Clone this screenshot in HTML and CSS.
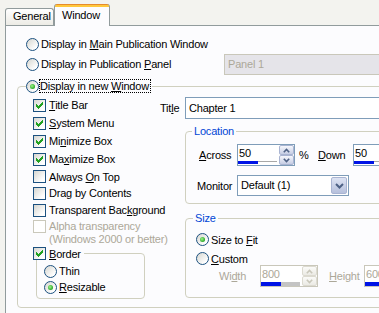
FILE: index.html
```html
<!DOCTYPE html>
<html>
<head>
<meta charset="utf-8">
<link rel="stylesheet" href="styles.css">
</head>
<body>
<svg class="defs" width="0" height="0" aria-hidden="true">
  <defs>
    <path id="chk" d="M8 2h1v1h-1z M7 3h2v1h-2z M2 4h1v1h-1z M6 4h3v1h-3z M2 5h2v1h-2z M5 5h3v1h-3z M2 6h5v1h-5z M3 7h3v1h-3z M4 8h1v1h-1z"/>
  </defs>
</svg>

<div class="tabs">
  <div class="tab">General</div>
  <div class="tab active">Window</div>
</div>

<div class="panel">
  <div class="row">
    <span class="radio"></span><span class="lbl">Display in <u>M</u>ain Publication Window</span>
  </div>
  <div class="row">
    <div class="opt"><span class="radio"></span><span class="lbl">Display in Publication <u>P</u>anel</span></div>
    <div class="combo off">Panel 1</div>
  </div>

  <fieldset class="grp main">
    <legend class="lg-main"><span class="radio on"></span><span class="focus">Display in new <u>W</u>indow</span></legend>
    <div class="cols">
      <div class="left">
        <div class="ck h18"><span class="box"><svg width="11" height="11"><use href="#chk"/></svg></span><span class="t"><u>T</u>itle Bar</span></div>
        <div class="ck h18"><span class="box"><svg width="11" height="11"><use href="#chk"/></svg></span><span class="t"><u>S</u>ystem Menu</span></div>
        <div class="ck h18"><span class="box"><svg width="11" height="11"><use href="#chk"/></svg></span><span class="t">Mi<u>n</u>imize Box</span></div>
        <div class="ck h18"><span class="box"><svg width="11" height="11"><use href="#chk"/></svg></span><span class="t">Ma<u>x</u>imize Box</span></div>
        <div class="ck h17"><span class="box"></span><span class="t">Always <u>O</u>n Top</span></div>
        <div class="ck h16"><span class="box"></span><span class="t">Drag by Contents</span></div>
        <div class="ck h18"><span class="box"></span><span class="t">Transparent Bac<u>k</u>ground</span></div>
        <div class="ck alpha"><span class="box"></span><span class="t">Alpha transparency<br>(Windows 2000 or better)</span></div>

        <fieldset class="grp bord">
          <legend class="lg-bord"><span class="box"><svg width="11" height="11"><use href="#chk"/></svg></span><span class="t"><u>B</u>order</span></legend>
          <div class="bord-in">
            <div class="rd"><span class="radio"></span><span class="t">Thin</span></div>
            <div class="rd"><span class="radio on"></span><span class="t"><u>R</u>esizable</span></div>
          </div>
        </fieldset>
      </div>

      <div class="right">
        <div class="title-row">
          <span class="tl">Tit<u>l</u>e</span>
          <div class="edit">Chapter 1</div>
        </div>

        <fieldset class="grp loc">
          <legend class="lg-blue">Location</legend>
          <div class="loc-in">
            <div class="frow">
              <span class="lab across"><u>A</u>cross</span>
              <div class="spin">
                <div class="val"><span class="n">50</span><div class="bar"><span class="b"></span><span class="g"></span></div></div>
                <div class="btns">
                  <span class="sb"><svg width="7" height="5"><polyline points="0.8,4.2 3.5,1.4 6.2,4.2"/></svg></span>
                  <span class="sb"><svg width="7" height="5"><polyline points="0.8,0.8 3.5,3.6 6.2,0.8"/></svg></span>
                </div>
              </div>
              <span class="pct">%</span>
              <span class="down"><u>D</u>own</span>
              <div class="spin">
                <div class="val"><span class="n">50</span><div class="bar"><span class="b"></span><span class="g"></span></div></div>
                <div class="btns">
                  <span class="sb"><svg width="7" height="5"><polyline points="0.8,4.2 3.5,1.4 6.2,4.2"/></svg></span>
                  <span class="sb"><svg width="7" height="5"><polyline points="0.8,0.8 3.5,3.6 6.2,0.8"/></svg></span>
                </div>
              </div>
            </div>
            <div class="frow mrow">
              <span class="lab">Monitor</span>
              <div class="dd">
                <span class="dd-t">Default (1)</span>
                <span class="dd-b"><svg width="9" height="6"><polyline points="1,1 4.5,4.5 8,1"/></svg></span>
              </div>
            </div>
          </div>
        </fieldset>

        <fieldset class="grp size">
          <legend class="lg-blue">Size</legend>
          <div class="size-in">
            <div class="rd13"><span class="radio on"></span><span class="t">Size to <u>F</u>it</span></div>
            <div class="rd13 custom"><span class="radio"></span><span class="t"><u>C</u>ustom</span></div>
            <div class="wrow">
              <span class="wl">Wi<u>d</u>th</span>
              <div class="spin off">
                <div class="val"><span class="n">800</span><div class="bar"><span class="b"></span><span class="g"></span></div></div>
                <div class="btns">
                  <span class="sb"><svg width="7" height="5"><polyline points="0.8,4.2 3.5,1.4 6.2,4.2"/></svg></span>
                  <span class="sb"><svg width="7" height="5"><polyline points="0.8,0.8 3.5,3.6 6.2,0.8"/></svg></span>
                </div>
              </div>
              <span class="hl"><u>H</u>eight</span>
              <div class="spin off">
                <div class="val"><span class="n">600</span><div class="bar"><span class="b"></span><span class="g"></span></div></div>
                <div class="btns">
                  <span class="sb"><svg width="7" height="5"><polyline points="0.8,4.2 3.5,1.4 6.2,4.2"/></svg></span>
                  <span class="sb"><svg width="7" height="5"><polyline points="0.8,0.8 3.5,3.6 6.2,0.8"/></svg></span>
                </div>
              </div>
            </div>
          </div>
        </fieldset>
      </div>
    </div>
  </fieldset>
</div>
</body>
</html>
```

FILE: styles.css
```css
* { box-sizing: border-box; }
html, body { margin: 0; padding: 0; }
body {
  width: 379px;
  height: 313px;
  overflow: hidden;
  background: #f3f3ef;
  font-family: "Liberation Sans", Arial, sans-serif;
  font-size: 11px;
  letter-spacing: -0.2px;
  color: #000;
}
u { text-decoration: underline; text-underline-offset: 1px; text-decoration-thickness: 1px; }
.defs { position: absolute; width: 0; height: 0; }

/* tabs */
.tabs {
  display: flex;
  align-items: flex-end;
  height: 25px;
  padding-left: 5px;
  position: relative;
  z-index: 2;
}
.tab {
  width: 49px;
  height: 17px;
  border: 1px solid #919b9c;
  border-bottom: 0;
  border-radius: 3px 3px 0 0;
  background: linear-gradient(#ffffff, #ecebe5);
  padding-left: 7px;
  line-height: 14px;
  white-space: nowrap;
}
.tab.active {
  width: 56px;
  height: 22px;
  margin-bottom: -1px;
  border-top: 0;
  background: linear-gradient(#e68b2c 0, #e68b2c 1px, #ffc83c 1px, #ffc83c 3px, #fcfcfe 3px);
  padding-top: 5px;
  line-height: 13px;
}

/* panel */
.panel {
  margin-left: 5px;
  width: 420px;
  height: 300px;
  border-top: 1px solid #919b9c;
  border-left: 1px solid #919b9c;
  background: #fcfcfe;
  padding: 8px 0 0 11px;
}
.row {
  display: flex;
  align-items: center;
  height: 20px;
  padding-left: 9px;
}
.opt { display: flex; align-items: center; width: 198px; }
.lbl { margin-left: 2px; white-space: nowrap; }
.combo {
  height: 21px;
  width: 180px;
  border: 1px solid #7f9db9;
  background: #fff;
  padding-left: 3px;
  line-height: 19px;
}
.combo.off { border-color: #c9c7ba; background: #e5e4e9; color: #aca899; }

/* radio & checkbox */
.radio {
  flex: none;
  position: relative;
  width: 13px;
  height: 13px;
  border-radius: 50%;
  border: 1px solid #1c5180;
  background: linear-gradient(135deg, #d6d6d0, #ffffff 80%);
}
.radio.on::after {
  content: "";
  position: absolute;
  left: 3px;
  top: 3px;
  width: 5px;
  height: 5px;
  border-radius: 50%;
  background: radial-gradient(circle at 40% 40%, #a0f58a, #21a121 75%);
}
.box {
  flex: none;
  width: 13px;
  height: 13px;
  border: 1px solid #1c5180;
  background: linear-gradient(135deg, #d6d6d0, #ffffff 80%);
}
.box svg { display: block; fill: #21a121; shape-rendering: crispEdges; }

/* group boxes */
.grp {
  border: 1px solid #d0d0bf;
  border-radius: 4px;
  padding: 0;
  margin: 0;
  min-width: 0;
}
.main { margin-top: 5px; width: 410px; }
.lg-main {
  display: flex;
  align-items: center;
  height: 14px;
  margin-left: 8px;
  padding: 0 1px 0 0;
}
.focus {
  border: 1px dotted #000;
  padding: 0 1px 0 0;
  line-height: 12px;
  white-space: nowrap;
}
.cols { display: flex; }
.left { flex: none; width: 142px; padding: 3px 0 8px 15px; }
.ck { display: flex; align-items: center; }
.ck .t { margin-left: 3px; white-space: nowrap; }
.h18 { height: 18px; }
.h17 { height: 17px; }
.h16 { height: 16px; }
.alpha { align-items: flex-start; padding-top: 1px; color: #aca899; }
.alpha .box { border-color: #cac8bb; background: #fff; }
.alpha .t { line-height: 13px; }

.bord { margin: 1px 0 0 3px; width: 109px; }
.lg-bord {
  display: flex;
  align-items: center;
  height: 13px;
  margin-left: -4px;
  padding: 0 3px 0 0;
}
.lg-bord .t { margin-left: 3px; }
.bord-in { padding: 3px 0 3px 7px; }
.rd { display: flex; align-items: center; height: 16px; }
.rd .t, .rd13 .t { margin-left: 2px; white-space: nowrap; }

/* right column */
.right { flex: none; width: 250px; padding-top: 4px; }
.title-row { display: flex; align-items: center; height: 22px; }
.tl { width: 25px; }
.edit {
  width: 220px;
  height: 22px;
  border: 1px solid #7f9db9;
  background: #fff;
  padding-left: 3px;
  line-height: 20px;
}
.lg-blue { color: #0046d5; padding: 0 2px; line-height: 13px; }
.loc { margin: 6px 0 0 25px; width: 220px; }
.loc .lg-blue { margin-left: 6px; }
.loc-in { padding: 6px 0 7px 11px; }
.frow { display: flex; align-items: center; height: 22px; }
.mrow { margin-top: 9px; height: 21px; }
.lab { width: 40px; flex: none; }
.across { padding-left: 2px; }
.pct { width: 19px; margin-left: 4px; flex: none; }
.down { width: 35px; flex: none; }

.spin {
  flex: none;
  display: flex;
  width: 58px;
  height: 22px;
  border: 1px solid #7f9db9;
  background: #fff;
}
.val { flex: 1; display: flex; flex-direction: column; padding-top: 2px; }
.val .n { line-height: 13px; padding-left: 1px; }
.bar { display: flex; height: 3px; margin-top: 1px; }
.bar .b { width: 20px; background: #0014e6; }
.bar .g { width: 19px; height: 1px; background: #a8a8a8; }
.btns { width: 15px; display: flex; flex-direction: column; }
.sb {
  height: 10px;
  border: 1px solid #a9b4d2;
  border-radius: 2px;
  background: linear-gradient(#f6f7fc, #c6cde4);
  display: flex;
  align-items: center;
  justify-content: center;
}
.sb svg { display: block; fill: none; stroke: #4d6185; stroke-width: 1.6; }

.spin.off { border-color: #c9c7ba; color: #aca899; }
.spin.off .bar { height: 4px; }
.spin.off .bar .g { height: 4px; background: #c4c4c4; }
.spin.off .sb { border-color: #dcdad0; background: linear-gradient(#fbfbf9, #ebeae4); }
.spin.off .sb svg { stroke: #c9c7ba; }

.dd {
  flex: none;
  display: flex;
  width: 112px;
  height: 21px;
  border: 1px solid #7f9db9;
  background: #fff;
}
.dd-t { flex: 1; padding-left: 3px; line-height: 19px; }
.dd-b {
  width: 16px;
  margin: 1px;
  border: 1px solid #a9b4d2;
  border-radius: 2px;
  background: linear-gradient(#dde3f3, #b6c0dc);
  display: flex;
  align-items: center;
  justify-content: center;
}
.dd-b svg { display: block; fill: none; stroke: #4d6185; stroke-width: 2; }

.size { margin: 8px 0 0 25px; width: 220px; }
.size .lg-blue { margin-left: 7px; }
.size-in { padding: 8px 0 10px 10px; }
.rd13 { display: flex; align-items: center; height: 13px; }
.custom { margin-top: 6px; }
.wrow { display: flex; align-items: center; height: 22px; padding-left: 23px; color: #aca899; }
.wl { width: 41px; flex: none; }
.hl { width: 35px; margin-left: 11px; flex: none; }
```
